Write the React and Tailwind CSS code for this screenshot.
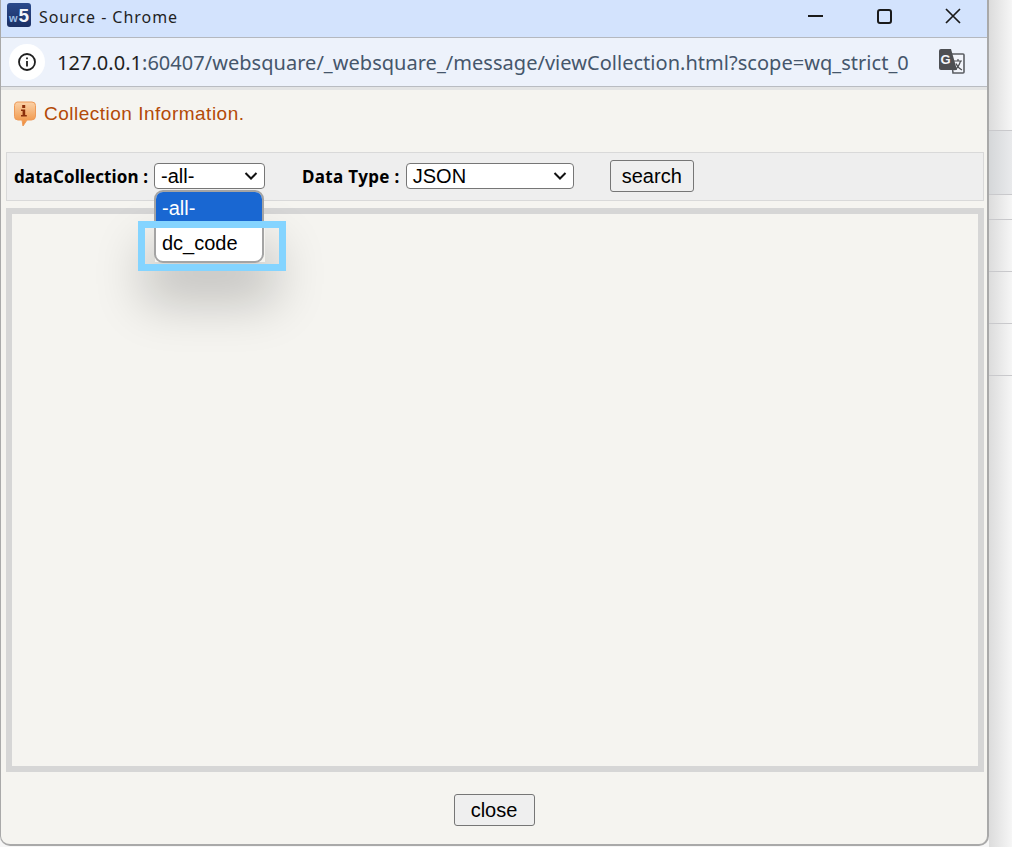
import React from "react";

const Chevron = () => (
  <svg width="14" height="8" viewBox="0 0 14 8" fill="none" stroke="#111" strokeWidth="2">
    <path d="M1.5 1 L7 6.5 L12.5 1" />
  </svg>
);

// native looking select, closed
const SelectBox = ({ value, className }) => (
  <div className={`flex items-center justify-between h-[26px] bg-white border border-[#767676] rounded-[4px] pl-[6px] pr-[6px] text-[20px] leading-none text-black ${className}`}>
    <span>{value}</span>
    <Chevron />
  </div>
);

const LegacyButton = ({ label, className }) => (
  <button className={`flex items-center justify-center bg-[#efefef] border border-[#767676] rounded-[3px] text-[20px] leading-none text-black ${className}`}>
    {label}
  </button>
);

const W5Logo = () => (
  <svg width="24" height="24" viewBox="0 0 24 24" className="shrink-0 mb-[7px]">
    <defs>
      <linearGradient id="logo" x1="0" y1="0" x2="0" y2="1">
        <stop offset="0" stopColor="#2a4a8c" />
        <stop offset="1" stopColor="#1b2f63" />
      </linearGradient>
    </defs>
    <rect width="24" height="24" rx="3" fill="url(#logo)" />
    <text x="2" y="19" fontSize="11" fontWeight="700" fill="#9dbfe6" fontFamily="Liberation Sans">w</text>
    <text x="11.5" y="19" fontSize="19" fontWeight="700" fill="#f2f5fa" fontFamily="Liberation Sans">5</text>
  </svg>
);

const InfoCircle = () => (
  <div className="flex items-center justify-center w-[36px] h-[36px] rounded-full bg-white">
    <svg width="20" height="20" viewBox="0 0 20 20" fill="none" stroke="#1f1f1f" strokeWidth="1.8">
      <circle cx="10" cy="10" r="8" />
      <path d="M10 9 V14.5" />
      <path d="M10 5.5 V7.2" />
    </svg>
  </div>
);

const TranslateIcon = () => (
  <svg width="26" height="26" viewBox="0 0 26 26">
    <path d="M12 5 H24 a1 1 0 0 1 1 1 V23 a1 1 0 0 1 -1 1 H14 Z" fill="#f2f5fb" stroke="#5b5e63" strokeWidth="1.6" />
    <path d="M2 0 H12 L18 21 H2 a2 2 0 0 1 -2 -2 V2 a2 2 0 0 1 2 -2 Z" fill="#4d4f53" />
    <text x="1.5" y="15" fontSize="13" fontWeight="700" fill="#f4f6fb" fontFamily="Liberation Sans">G</text>
    <path d="M15 12 H23 M19 10 V12 M21.5 12 C20.5 16 18.5 19 15.5 21 M17 14.5 C18 17 20 19.5 23 21" fill="none" stroke="#4d4f53" strokeWidth="1.2" />
  </svg>
);

const BubbleInfo = () => (
  <svg width="24" height="28" viewBox="0 0 24 28" className="shrink-0 mt-[3px]">
    <defs>
      <linearGradient id="bubble" x1="0" y1="0" x2="0" y2="1">
        <stop offset="0" stopColor="#fbd2a8" />
        <stop offset="1" stopColor="#ef8a35" />
      </linearGradient>
    </defs>
    <path d="M4 1 H19 a3.5 3.5 0 0 1 3.5 3.5 V15 a4 4 0 0 1 -4 4 H14 L10 25 L9 19 H5 a3.5 3.5 0 0 1 -3.5 -3.5 V4.5 A3.5 3.5 0 0 1 4 1 Z" fill="url(#bubble)" stroke="#ee9a58" strokeWidth="1" />
    <rect x="9.2" y="4" width="3" height="3" fill="#8c2f0a" />
    <path d="M8 8.5 H12.2 V14 H13.8 V15.5 H8 V14 H9.6 V10 H8 Z" fill="#8c2f0a" />
  </svg>
);

export default function App() {
  return (
    <div className="relative flex w-[1012px] h-[847px] overflow-hidden bg-[#f6f6f6] font-['Liberation_Sans',Arial,sans-serif]">
      {/* popup window */}
      <div className="relative flex flex-col w-[989px] h-[846px] shrink-0 border-r-2 border-b-2 border-l border-[#a9a9a9] rounded-b-[10px] bg-[#f5f4f0] overflow-hidden">
        <div className="flex items-center h-[38px] shrink-0 bg-[#d3e3fd] border-b border-[#b4b8bf] pl-[6px]">
          <W5Logo />
          <span className="ml-[8px] mb-[3px] text-[16px] tracking-[0.95px] text-[#1f1f1f] font-['Noto_Sans',sans-serif]">Source - Chrome</span>
          <div className="ml-auto flex items-center h-full pb-[5px]">
            <div className="flex items-center justify-center w-[69px]">
              <div className="w-[15px] h-[2px] bg-[#1a1a1a]" />
            </div>
            <div className="flex items-center justify-center w-[69px]">
              <div className="w-[15px] h-[15px] border-2 border-[#1a1a1a] rounded-[3px]" />
            </div>
            <div className="flex items-center justify-center w-[68px]">
              <svg width="16" height="16" viewBox="0 0 16 16" stroke="#1a1a1a" strokeWidth="1.7" fill="none">
                <path d="M1 1 L15 15 M15 1 L1 15" />
              </svg>
            </div>
          </div>
        </div>

        <div className="flex items-center h-[49px] shrink-0 bg-[#edf2fb] border-b border-[#b9bcc1] pl-[8px]">
          <InfoCircle />
          <span className="ml-[12px] mt-[2px] text-[20px] tracking-[0.03px] text-[#45566b] font-['Noto_Sans',sans-serif]">
            <span className="text-[#1f1f1f]">127.0.0.1</span>:60407/websquare/_websquare_/message/viewCollection.html?scope=wq_strict_0
          </span>
          <div className="ml-auto mr-[22px] flex">
            <TranslateIcon />
          </div>
        </div>
        <div className="h-[3px] shrink-0 bg-[#e3e4e4]" />

        <div className="flex flex-col flex-1 min-h-0 pl-[5px] pr-[3px]">
          <div className="flex items-center gap-[7px] h-[47px] pl-[7px] shrink-0">
            <BubbleInfo />
            <span className="mt-[2px] text-[19px] tracking-[0.5px] text-[#b34a08]">Collection Information.</span>
          </div>

          <div className="flex items-center h-[49px] mt-[15px] pb-[2px] shrink-0 bg-[#eeeeee] border border-[#d9d9d9] pl-[7px] text-black">
            <span className="mt-[2px] text-[17px] font-bold font-['Noto_Sans',sans-serif] tracking-[0.1px]">dataCollection :</span>
            <SelectBox value="-all-" className="ml-[6px] w-[111px]" />
            <span className="ml-[37px] mt-[2px] text-[17px] font-bold font-['Noto_Sans',sans-serif] tracking-[0.35px]">Data Type :</span>
            <SelectBox value="JSON" className="ml-[6px] w-[168px]" />
            <LegacyButton label="search" className="ml-[36px] w-[84px] h-[32px]" />
          </div>

          <div className="flex-1 min-h-0 mt-[7px] border-[6px] border-[#d6d6d6] bg-[#f5f4f0]" />

          <div className="flex items-center justify-center h-[72px] pt-[4px] pr-[2px] shrink-0">
            <LegacyButton label="close" className="w-[81px] h-[32px]" />
          </div>
        </div>

        {/* shadow thrown by the open list */}
        <div className="absolute left-[154px] top-[225px] w-[110px] h-[37px] shadow-[0_30px_50px_12px_rgba(0,0,0,0.2)]" />
      </div>

      {/* page behind the popup */}
      <div className="flex flex-col flex-1 min-w-0 bg-gradient-to-r from-[#dcdcdc] to-[#f6f6f6]">
        <div className="h-[131px] border-b border-[#c9c9cc]" />
        <div className="h-[64px] border-b border-[#c9c9cc] bg-gradient-to-r from-[#d5d7d9] to-[#e9eaec]" />
        <div className="h-[25px] border-b border-[#c9c9cc]" />
        <div className="h-[52px] border-b border-[#c9c9cc]" />
        <div className="h-[52px] border-b border-[#c9c9cc]" />
        <div className="h-[52px] border-b border-[#c9c9cc]" />
      </div>

      {/* open dropdown list */}
      <div className="absolute left-[154px] top-[190px] w-[110px] h-[73px] flex flex-col rounded-[9px] overflow-hidden border-2 border-[#a4a4a4] bg-white text-[20px]">
        <div className="flex items-center h-[35px] pl-[6px] pb-[3px] shrink-0 bg-[#1967d2] text-white">-all-</div>
        <div className="flex items-center flex-1 pl-[6px] pb-[2px] text-black">dc_code</div>
      </div>

      {/* annotation box */}
      <div className="absolute left-[138px] top-[221px] w-[148px] h-[50px] border-[7px] border-[#84d4ff] pointer-events-none" />
    </div>
  );
}
